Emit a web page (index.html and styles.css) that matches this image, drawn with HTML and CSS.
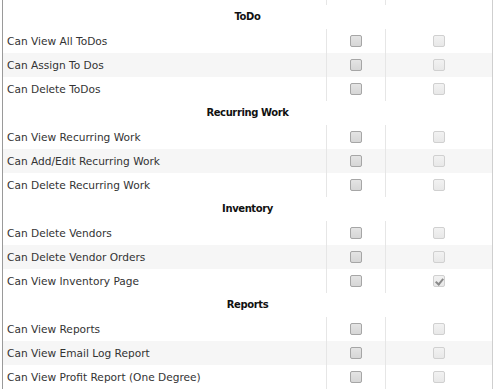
FILE: index.html
```html
<!DOCTYPE html>
<html lang="en">
<head>
    <meta charset="UTF-8">
    <meta name="viewport" content="width=device-width, initial-scale=1.0">
    <title>Permissions</title>
    <link rel="stylesheet" href="styles.css">
</head>
<body>
    <div class="panel">
        <table class="perms">
            <colgroup>
                <col class="col-label">
                <col class="col-role">
                <col class="col-role-wide">
            </colgroup>
            <tbody>
                <!-- tail of the row above the fold -->
                <tr class="stub"><td></td><td></td><td></td></tr>

                <tr class="group"><th colspan="3">ToDo</th></tr>
                <tr><td>Can View All ToDos</td><td><input type="checkbox"></td><td><input type="checkbox" disabled></td></tr>
                <tr class="alt"><td>Can Assign To Dos</td><td><input type="checkbox"></td><td><input type="checkbox" disabled></td></tr>
                <tr><td>Can Delete ToDos</td><td><input type="checkbox"></td><td><input type="checkbox" disabled></td></tr>

                <tr class="group"><th colspan="3">Recurring Work</th></tr>
                <tr><td>Can View Recurring Work</td><td><input type="checkbox"></td><td><input type="checkbox" disabled></td></tr>
                <tr class="alt"><td>Can Add/Edit Recurring Work</td><td><input type="checkbox"></td><td><input type="checkbox" disabled></td></tr>
                <tr><td>Can Delete Recurring Work</td><td><input type="checkbox"></td><td><input type="checkbox" disabled></td></tr>

                <tr class="group"><th colspan="3">Inventory</th></tr>
                <tr><td>Can Delete Vendors</td><td><input type="checkbox"></td><td><input type="checkbox" disabled></td></tr>
                <tr class="alt"><td>Can Delete Vendor Orders</td><td><input type="checkbox"></td><td><input type="checkbox" disabled></td></tr>
                <tr><td>Can View Inventory Page</td><td><input type="checkbox"></td><td><input type="checkbox" disabled checked></td></tr>

                <tr class="group"><th colspan="3">Reports</th></tr>
                <tr><td>Can View Reports</td><td><input type="checkbox"></td><td><input type="checkbox" disabled></td></tr>
                <tr class="alt"><td>Can View Email Log Report</td><td><input type="checkbox"></td><td><input type="checkbox" disabled></td></tr>
                <tr><td>Can View Profit Report (One Degree)</td><td><input type="checkbox"></td><td><input type="checkbox" disabled></td></tr>
            </tbody>
        </table>
    </div>
</body>
</html>
```

FILE: styles.css
```css
body {
    margin: 0;
    padding: 0 0 0 2px;
    background: #fff;
    font-family: 'DejaVu Sans', sans-serif;
    font-size: 10.6px;
    color: #333;
}
.panel {
    width: 489px;
    border-left: 1px solid #9a9a9a;
    border-right: 1px solid #cfcfcf;
    overflow: hidden;
}
.perms {
    width: 100%;
    border-collapse: collapse;
    table-layout: fixed;
}
.col-label {
    width: 323px;
}
.col-role {
    width: 59px;
}
.perms td {
    height: 24px;
    padding: 0 0 0 4px;
    box-sizing: border-box;
    vertical-align: middle;
    white-space: nowrap;
}
.perms td + td {
    padding: 0;
    text-align: center;
    border-left: 1px solid #e6e6e6;
}
.perms tr.stub td {
    height: 5px;
}
.perms tr.alt td {
    background: #f6f6f6;
}
.perms th {
    height: 24px;
    padding: 0 0 1px;
    box-sizing: border-box;
    font-size: 10px;
    font-weight: bold;
    letter-spacing: -0.4px;
    color: #111;
    text-align: center;
    vertical-align: middle;
}
.perms input {
    -webkit-appearance: none;
    appearance: none;
    display: block;
    margin: 0 auto;
    width: 12px;
    height: 12px;
    border: 1px solid #a6a6a6;
    border-radius: 2px;
    background: linear-gradient(#e4e4e4, #d6d6d6);
    box-sizing: border-box;
    position: relative;
}
.perms input:disabled {
    border-color: #d0d0d0;
    background: linear-gradient(#f2f2f2, #e8e8e8);
}
.perms input:checked::after {
    content: '';
    position: absolute;
    left: 3px;
    top: 1px;
    width: 3px;
    height: 6px;
    border: solid #8a8a8a;
    border-width: 0 2px 2px 0;
    transform: rotate(40deg);
}
```
